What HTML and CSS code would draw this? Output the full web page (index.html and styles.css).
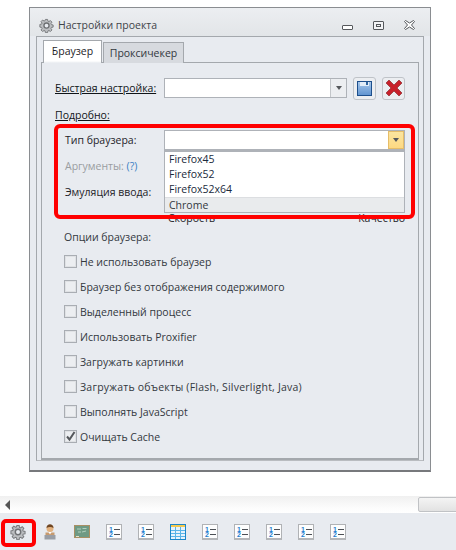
FILE: index.html
```html
<!DOCTYPE html>
<html lang="en">
  <head>
    <meta charset="UTF-8" />
    <meta name="viewport" content="width=device-width, initial-scale=1.0" />
    <title>Настройки проекта</title>
    <link rel="stylesheet" href="styles.css">
  </head>
  <body>
    <svg class="defs" width="0" height="0">
      <symbol id="gear" viewBox="0 0 20 20">
        <path d="M8.400 1h3.200l.5 2.600 1.500.6 2.200-1.500 2.300 2.300-1.500 2.200.6 1.500 2.600.5v3.200l-2.600.5-.6 1.500 1.500 2.200-2.300 2.300-2.200-1.500-1.500.6-.5 2.600H8.400l-.5-2.600-1.500-.6-2.200 1.500-2.300-2.300 1.500-2.200-.6-1.500-2.600-.5V8.400l2.600-.5.6-1.500-1.500-2.200 2.300-2.300 2.200 1.500 1.500-.6z" transform="translate(1 1) scale(.9)" fill="#bcbec1" stroke="#77797c" stroke-width="1.400" />
        <circle cx="10" cy="10" r="3.400" fill="#e8ebf0" stroke="#6f7174" stroke-width="1.800" />
      </symbol>
    </svg>

    <div class="window">
      <div class="titlebar">
        <svg class="title-icon"><use href="#gear" /></svg>
        <span class="title-text">Настройки проекта</span>
        <div class="window-btns">
          <span class="btn-min"></span>
          <span class="btn-max"></span>
          <svg class="btn-close" viewBox="0 0 11 10">
            <path d="M1.500.5l4 2.500 4-2.500 1 1-3 3.500 3 3.500-1 1-4-2.500-4 2.500-1-1 3-3.500-3-3.500z" fill="#fff" stroke="#55585c" />
          </svg>
        </div>
      </div>

      <div class="outer-panel">
        <div class="tabs">
          <div class="tab tab-active">Браузер</div>
          <div class="tab">Проксичекер</div>
        </div>

        <div class="tab-body">
          <div class="quick-row">
            <span class="label-link">Быстрая настройка:</span>
            <div class="combo">
              <div class="combo-arrow"><i></i></div>
            </div>
            <div class="tool-btn">
              <svg width="15" height="15" viewBox="0 0 15 15">
                <defs>
                  <linearGradient id="disk" x1="0" y1="0" x2="0" y2="1">
                    <stop offset="0" stop-color="#a9c9ec" />
                    <stop offset="1" stop-color="#5f93d0" />
                  </linearGradient>
                </defs>
                <rect x=".5" y=".5" width="14" height="14" fill="url(#disk)" stroke="#1d4f8c" />
                <rect x="3" y="1" width="9" height="4" fill="#e3eef9" />
                <rect x="9" y="1" width="2" height="3" fill="#2f649e" />
              </svg>
            </div>
            <div class="tool-btn">
              <svg width="18" height="18" viewBox="0 0 18 18">
                <path d="M1 4l3-3 5 5 5-5 3 3-5 5 5 5-3 3-5-5-5 5-3-3 5-5z" fill="#c8202a" stroke="#a3484c" />
              </svg>
            </div>
          </div>

          <div class="label-link details">Подробно:</div>

          <div class="browser-block">
            <div class="form-row">
              <span class="form-label">Тип браузера:</span>
              <div class="combo combo-wide combo-hot">
                <div class="combo-arrow"><i></i></div>
              </div>
            </div>
            <div class="form-row">
              <span class="form-label muted">Аргументы: <a class="help">(?)</a></span>
            </div>
            <div class="form-row">
              <span class="form-label">Эмуляция ввода:</span>
            </div>
            <div class="speed-row">
              <span>Скорость</span>
              <span>Качество</span>
            </div>

            <div class="dropdown">
              <div class="dropdown-item">Firefox45</div>
              <div class="dropdown-item">Firefox52</div>
              <div class="dropdown-item">Firefox52x64</div>
              <div class="dropdown-item dropdown-hover">Chrome</div>
            </div>
          </div>

          <div class="options">
            <div class="options-title">Опции браузера:</div>
            <label class="check-row"><span class="check"></span>Не использовать браузер</label>
            <label class="check-row"><span class="check"></span>Браузер без отображения содержимого</label>
            <label class="check-row"><span class="check"></span>Выделенный процесс</label>
            <label class="check-row"><span class="check"></span>Использовать Proxifier</label>
            <label class="check-row"><span class="check"></span>Загружать картинки</label>
            <label class="check-row check-wide"><span class="check"></span>Загружать объекты (Flash, Silverlight, Java)</label>
            <label class="check-row"><span class="check"></span>Выполнять JavaScript</label>
            <label class="check-row">
              <span class="check">
                <svg width="11" height="11" viewBox="0 0 11 11">
                  <path d="M2 5.500l2.500 3L9.500 1" fill="none" stroke="#55585c" stroke-width="2" />
                </svg>
              </span>
              Очищать Cache
            </label>
          </div>
        </div>
      </div>
    </div>

    <div class="scrollbar">
      <span class="scroll-left"></span>
      <span class="scroll-thumb"></span>
    </div>

    <div class="toolbar">
      <div class="tb-item tb-marked"><svg width="16" height="16"><use href="#gear" /></svg></div>
      <div class="tb-item">
        <svg width="12" height="16" viewBox="0 0 12 16">
          <circle cx="6" cy="4.500" r="3.500" fill="#e3b27f" />
          <path d="M2.500 4c0-5 7-5 7 0-2-1.200-5-1.200-7 0z" fill="#6e4522" />
          <path d="M1.500 8.500h9V11h-9z" fill="#c79a6f" />
          <path d="M4.500 8h3L6 10.500z" fill="#fff" />
          <path d="M.5 11h11v4.500H.5z" fill="#9a9ea5" />
        </svg>
      </div>
      <div class="tb-item">
        <svg width="16" height="13" viewBox="0 0 16 13">
          <rect x=".5" y=".5" width="15" height="12" fill="#6f9a84" stroke="#a98f63" />
          <path d="M3 4h4M8.500 3.500h4M4 7h3M8 7l4-1" stroke="#b2d0be" fill="none" />
          <rect x="2" y="11" width="3" height="1" fill="#e8e0c8" />
        </svg>
      </div>
      <div class="tb-item"><div class="list-icon"><b>1</b><b>2</b></div></div>
      <div class="tb-item"><div class="list-icon"><b>1</b><b>2</b></div></div>
      <div class="tb-item">
        <svg width="16" height="16" viewBox="0 0 16 16">
          <rect x=".5" y=".5" width="15" height="15" fill="#e6f3fc" stroke="#1c86c9" />
          <rect x="1" y="1" width="14" height="2" fill="#f6c94e" />
          <path d="M1 6.500h14M1 9.500h14M1 12.500h14M5.500 3v12M10.500 3v12" stroke="#5ab4e8" />
        </svg>
      </div>
      <div class="tb-item"><div class="list-icon"><b>1</b><b>2</b></div></div>
      <div class="tb-item"><div class="list-icon"><b>1</b><b>2</b></div></div>
      <div class="tb-item"><div class="list-icon"><b>1</b><b>2</b></div></div>
      <div class="tb-item"><div class="list-icon"><b>1</b><b>2</b></div></div>
      <div class="tb-item"><div class="list-icon"><b>1</b><b>2</b></div></div>
    </div>
  </body>
</html>
```
FILE: styles.css
```css
*,
*::before,
*::after {
  margin: 0;
  padding: 0;
  box-sizing: border-box;
}

html,
body {
  width: 456px;
  height: 550px;
  overflow: hidden;
}

body {
  position: relative;
  background-color: #fff;
  font-family: "Open Sans", "Noto Sans", sans-serif;
  font-size: 10.5px;
  line-height: 14px;
  color: #1e2329;
  padding-top: 7px;
}

.defs {
  position: absolute;
}

/* window */
.window {
  width: 402px;
  height: 465px;
  margin-left: 29px;
  border: 1px solid #8a8d91;
  border-bottom: 2px solid #77797c;
  background-color: #e8ebf0;
  padding: 0 6px 9px;
  display: flex;
  flex-direction: column;
}

.titlebar {
  height: 28px;
  flex: none;
  display: flex;
  align-items: center;
  background: linear-gradient(#eceef1, #e2e5e8);
  margin: 0 -6px;
  padding: 6px 15px 0 9px;
}

.title-icon {
  width: 15px;
  height: 15px;
  margin-right: 4px;
}

.title-text {
  font-size: 10.5px;
  color: #3f444a;
}

.window-btns {
  margin-left: auto;
  display: flex;
  align-items: center;
  gap: 20px;
}

.btn-min {
  width: 11px;
  height: 5px;
  margin-top: 4px;
  border: 1px solid #55585c;
  border-radius: 1px;
  background-color: #fff;
}

.btn-max {
  width: 11px;
  height: 9px;
  border: 1px solid #55585c;
  border-radius: 1px;
  position: relative;
  background-color: #f3f4f6;
}

.btn-max::after {
  content: "";
  position: absolute;
  left: 2px;
  top: 2px;
  width: 5px;
  height: 3px;
  border: 1px solid #55585c;
}

.btn-close {
  width: 11px;
  height: 10px;
}

.outer-panel {
  flex: 1;
  border: 1px solid #a4a8ad;
  border-bottom-color: #b9bcc0;
  padding: 3px 4px 0;
  display: flex;
  flex-direction: column;
}

/* tabs */
.tabs {
  display: flex;
  padding-left: 2px;
  align-items: flex-end;
  height: 23px;
  flex: none;
  position: relative;
  z-index: 1;
  margin-bottom: -1px;
}

.tab {
  height: 21px;
  width: 81px;
  border: 1px solid #a4a8ad;
  border-bottom: none;
  background-color: #d7dadf;
  color: #33383e;
  text-align: center;
  line-height: 20px;
}

.tab-active {
  width: 59px;
  height: 23px;
  background-color: #e8ebf0;
  background-image: linear-gradient(#fff 20px, #e8ebf0 22px);
  line-height: 20px;
  margin-right: 1px;
  color: #1e2329;
}

.tab-body {
  flex: 1;
  border: 1px solid #a4a8ad;
  border-bottom: 2px solid #a4a8ad;
  padding: 13px 12px 0 13px;
}

/* form parts */
.quick-row {
  display: flex;
  align-items: center;
  height: 24px;
}

.label-link {
  color: #101418;
  text-decoration: underline;
  text-underline-offset: 1px;
}

.quick-row .label-link {
  width: 109px;
}

.combo {
  position: relative;
  width: 183px;
  height: 20px;
  background-color: #fff;
  border: 1px solid #aeb2b8;
}

.combo-wide {
  width: 241px;
}

.combo-arrow {
  position: absolute;
  right: 0;
  top: 0;
  width: 16px;
  height: 18px;
  border-left: 1px solid #c3c6ca;
  background-color: #eceef1;
  display: flex;
  align-items: center;
  justify-content: center;
}

.combo-arrow i {
  width: 0;
  height: 0;
  border-left: 3.500px solid transparent;
  border-right: 3.500px solid transparent;
  border-top: 4px solid #55585c;
}

.combo-hot .combo-arrow {
  border: 1px solid #e6bd68;
  background: linear-gradient(#fbe59f, #fdd983);
}

.tool-btn {
  width: 23px;
  height: 23px;
  margin-left: 6px;
  border: 1px solid #bfc3c8;
  border-radius: 3px;
  background-color: #eceef1;
  display: flex;
  align-items: center;
  justify-content: center;
}

.details {
  margin-top: 8px;
  height: 17px;
}

/* this block carries the red annotation frame */
.browser-block {
  position: relative;
  height: 105px;
  padding-top: 5px;
}

.browser-block::after {
  content: "";
  position: absolute;
  left: -1px;
  top: -1px;
  width: 361px;
  height: 95px;
  border: 4px solid #ff0000;
  border-radius: 6px;
  z-index: 3;
}

.form-row {
  display: flex;
  align-items: center;
  height: 20px;
  margin-bottom: 6px;
  padding-left: 10px;
}

.form-label {
  width: 99px;
  flex: none;
}

.muted {
  color: #9a9da1;
}

.help {
  color: #3a7fc4;
}

.speed-row {
  position: absolute;
  left: 113px;
  top: 86px;
  width: 237px;
  display: flex;
  justify-content: space-between;
}

.dropdown {
  position: absolute;
  left: 109px;
  top: 25px;
  width: 241px;
  height: 63px;
  background-color: #fff;
  border: 1px solid #aeb2b8;
  border-top-width: 2px;
  z-index: 2;
}

.dropdown-item {
  height: 15px;
  line-height: 15px;
  padding-left: 4px;
  color: #1a2a3c;
}

.dropdown-hover {
  background-color: #e9ebed;
  border-top: 1px solid #dcdee1;
  color: #33383e;
}

/* options */
.options {
  padding-left: 9px;
}

.options-title {
  height: 19px;
  color: #33383e;
}

.check-row {
  display: flex;
  align-items: center;
  height: 25px;
  color: #33383e;
}

.check-wide {
  letter-spacing: 0.22px;
}

.check {
  width: 13px;
  height: 13px;
  margin-right: 3px;
  border: 1px solid #a9adb3;
  box-shadow: inset 0 0 0 1px #dfe1e4;
  background-color: #eceef1;
  display: flex;
  align-items: center;
  justify-content: center;
}

/* bottom bar */
.scrollbar {
  position: absolute;
  left: 0;
  top: 496px;
  width: 456px;
  height: 17px;
  background: linear-gradient(#f0f0f0, #fcfcfc 70%, #fff);
}

.scroll-left {
  position: absolute;
  left: 5px;
  top: 4px;
  border-top: 5px solid transparent;
  border-bottom: 5px solid transparent;
  border-right: 5px solid #555;
}

.scroll-thumb {
  position: absolute;
  left: 418px;
  top: 1px;
  width: 40px;
  height: 15px;
  border: 1px solid #c0c2c5;
  border-radius: 2px;
  background: linear-gradient(#f4f4f4, #e2e2e2);
}

.toolbar {
  position: absolute;
  left: 0;
  top: 513px;
  width: 456px;
  height: 37px;
  background-color: #e8ebf0;
  display: flex;
  align-items: center;
  padding-left: 2px;
}

.tb-item {
  width: 32px;
  height: 20px;
  flex: none;
  display: flex;
  align-items: center;
  justify-content: center;
}

.tb-marked {
  position: relative;
}

.tb-marked::after {
  content: "";
  position: absolute;
  left: -1px;
  top: -3px;
  width: 35px;
  height: 28px;
  border: 4px solid #ff0000;
  border-radius: 5px;
}

.list-icon {
  width: 16px;
  height: 16px;
  padding: 2px 0 0 2px;
  border: 1px solid #b0b2b5;
  border-bottom: 2px solid #b4b6b9;
  background-color: #fdfdfd;
  font-family: "Liberation Sans", sans-serif;
  font-size: 7px;
  line-height: 5.500px;
  color: #1f7fd0;
}

.list-icon b {
  display: block;
  position: relative;
}

.list-icon b::after {
  content: "";
  position: absolute;
  left: 5px;
  top: 2px;
  width: 6px;
  height: 1px;
  background-color: #4b4f55;
}
```
